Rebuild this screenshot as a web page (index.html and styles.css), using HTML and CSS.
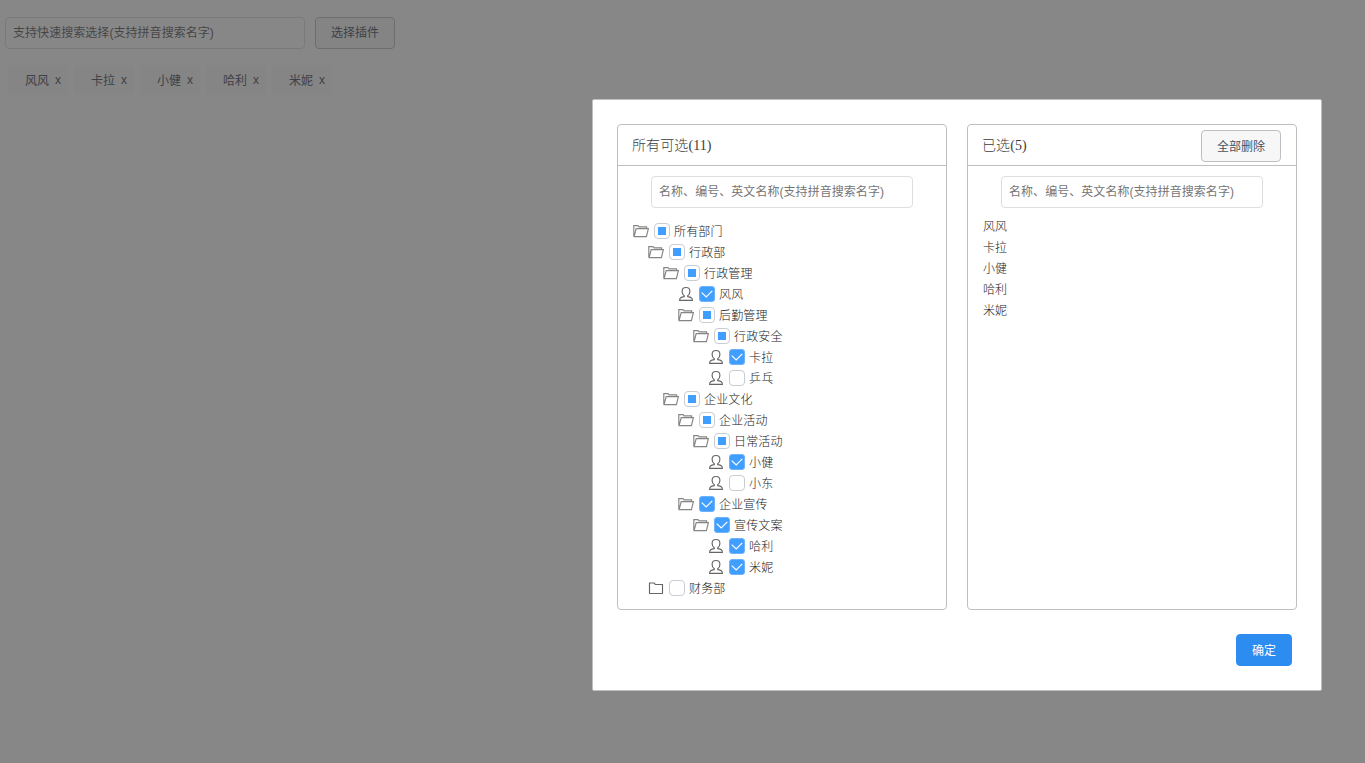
FILE: index.html
```html
<!DOCTYPE html>
<html lang="zh-CN">
<head>
  <meta charset="UTF-8">
  <meta name="viewport" content="width=device-width, initial-scale=1.0">
  <title>选择插件</title>
  <link rel="stylesheet" href="styles.css">
</head>
<body>
  <div class="page">
    <div class="search-bar">
      <input class="input search-input" type="text" placeholder="支持快速搜索选择(支持拼音搜索名字)">
      <button class="btn" type="button">选择插件</button>
    </div>
    <div class="tags">
      <span class="tag">风风 <i>x</i></span>
      <span class="tag">卡拉 <i>x</i></span>
      <span class="tag">小健 <i>x</i></span>
      <span class="tag">哈利 <i>x</i></span>
      <span class="tag">米妮 <i>x</i></span>
    </div>
  </div>

  <div class="mask"></div>

  <div class="dialog">
    <div class="panels">
      <div class="panel">
        <div class="panel-header"><span>所有可选(11)</span></div>
        <input class="input panel-input" type="text" placeholder="名称、编号、英文名称(支持拼音搜索名字)">
        <div id="tree" class="tree"></div>
      </div>
      <div class="panel">
        <div class="panel-header">
          <span>已选(5)</span>
          <button class="btn" type="button">全部删除</button>
        </div>
        <input class="input panel-input" type="text" placeholder="名称、编号、英文名称(支持拼音搜索名字)">
        <ul class="selected">
          <li>风风</li>
          <li>卡拉</li>
          <li>小健</li>
          <li>哈利</li>
          <li>米妮</li>
        </ul>
      </div>
    </div>
    <div class="dialog-footer">
      <button class="btn btn-primary" type="button">确定</button>
    </div>
  </div>

  <script src="tree.js"></script>
</body>
</html>
```

FILE: styles.css
```css
* {
  box-sizing: border-box;
}

body {
  margin: 0;
  height: 763px;
  overflow: hidden;
  background-color: #fff;
  color: #495060;
  font-family: "Liberation Sans", "Noto Sans CJK SC", sans-serif;
  font-size: 12px;
}

.page {
  padding: 17px 5px;
}

.search-bar {
  display: flex;
  gap: 10px;
}

.input {
  height: 32px;
  padding: 0 7px;
  border: 1px solid #dddee1;
  border-radius: 4px;
  background-color: #fff;
  font-family: inherit;
  font-size: 12px;
  letter-spacing: 0.05px;
}

.input::placeholder {
  color: #757575;
}

.search-input {
  width: 300px;
}

.search-input::placeholder {
  color: #5c5c5c;
}

.btn {
  height: 32px;
  padding: 0 15px 1px;
  border: 1px solid #bcbfc4;
  border-radius: 4px;
  background-color: #f7f7f7;
  color: #495060;
  font-family: inherit;
  font-size: 12px;
  cursor: pointer;
}

.search-bar .btn {
  padding-bottom: 3px;
}

.btn-primary {
  border-color: #2d8cf0;
  background-color: #2d8cf0;
  color: #fff;
}

.tags {
  display: flex;
  gap: 6px;
  padding: 16px 3px;
}

.tag {
  display: flex;
  width: 60px;
  height: 30px;
  padding: 0 0 2px 17px;
  gap: 6px;
  align-items: center;
  border-radius: 4px;
  background-color: #f9f9f9;
}

.tag i {
  padding-top: 1px;
  font-style: normal;
  cursor: pointer;
}

.mask {
  position: fixed;
  inset: 0;
  background-color: rgba(55, 55, 55, 0.6);
}

.dialog {
  position: fixed;
  top: 99px;
  left: 592px;
  width: 730px;
  height: 592px;
  padding: 24px;
  border: 1px solid #c0c0c0;
  border-radius: 2px;
  background-color: #fff;
}

.panels {
  display: flex;
  gap: 20px;
}

.panel {
  display: flex;
  flex-direction: column;
  width: 330px;
  height: 486px;
  border: 1px solid #bfbfbf;
  border-radius: 4px;
}

.panel-header {
  display: flex;
  justify-content: space-between;
  align-items: center;
  height: 41px;
  padding: 2px 15px 0 14px;
  border-bottom: 1px solid #bfbfbf;
  color: #3c3c3c;
  font-family: "Liberation Serif", "Noto Sans CJK SC", serif;
  font-size: 14px;
  font-weight: 300;
}

.panel-header span {
  padding-bottom: 5px;
  letter-spacing: 0.1px;
}

.panel-header .btn {
  font-family: "Liberation Sans", "Noto Sans CJK SC", sans-serif;
}

.panel-input {
  width: 262px;
  margin: 10px 33px 0;
}

.tree {
  padding: 12px 15px 0;
  color: #222;
}

.tree-node {
  display: flex;
  align-items: center;
  height: 21px;
  font-weight: 300;
}

.tree-node span {
  margin-left: 4px;
  letter-spacing: 0.15px;
}

.icon {
  width: 16px;
  height: 16px;
  margin-right: 5px;
  fill: none;
  stroke: #666;
  stroke-width: 1.15;
}

.icon-open {
  stroke: #858585;
}

.checkbox {
  display: flex;
  width: 16px;
  height: 16px;
  align-items: center;
  justify-content: center;
  border: 1px solid #c8cdd3;
  border-radius: 4px;
}

.checkbox.half::before {
  content: "";
  width: 8px;
  height: 8px;
  background-color: #409eff;
}

.checkbox.checked {
  border-color: #6db3fb;
  border-radius: 3px;
  background-color: #409eff;
}

.checkbox svg {
  width: 14px;
  height: 14px;
  fill: none;
  stroke: #fff;
  stroke-width: 1.2;
}

.selected {
  margin: 0;
  padding: 9px 15px;
  list-style: none;
  color: #222;
  font-weight: 300;
  line-height: 21px;
}

.dialog-footer {
  display: flex;
  justify-content: flex-end;
  padding: 24px 5px 0;
}
```

FILE: tree.js
```js
// name, level, icon, checkbox state
var nodes = [
  ['所有部门', 0, 'open', 'half'],
  ['行政部', 1, 'open', 'half'],
  ['行政管理', 2, 'open', 'half'],
  ['风风', 3, 'user', 'checked'],
  ['后勤管理', 3, 'open', 'half'],
  ['行政安全', 4, 'open', 'half'],
  ['卡拉', 5, 'user', 'checked'],
  ['乒乓', 5, 'user', ''],
  ['企业文化', 2, 'open', 'half'],
  ['企业活动', 3, 'open', 'half'],
  ['日常活动', 4, 'open', 'half'],
  ['小健', 5, 'user', 'checked'],
  ['小东', 5, 'user', ''],
  ['企业宣传', 3, 'open', 'checked'],
  ['宣传文案', 4, 'open', 'checked'],
  ['哈利', 5, 'user', 'checked'],
  ['米妮', 5, 'user', 'checked'],
  ['财务部', 1, 'closed', '']
];

var icons = {
  open: '<path d="M0.8 13.2V2.6H5L6.1 3.8H13.6V5.4M1.1 13.6L3.2 5.6H15.4L13.4 13.6Z"/>',
  closed: '<path d="M1.5 13.5V3H6L7.4 4.5H14.5V13.5Z"/>',
  user: '<path d="M6.3 9.8C4.9 8.8 4.1 7.2 4.1 5.4C4.1 3 5.7 1.5 8 1.5S11.9 3 11.9 5.4C11.9 7.2 11.1 8.8 9.7 9.8V10.6C12.8 11.3 14.4 11.6 14.4 14.4H1.6C1.6 11.6 3.2 11.3 6.3 10.6Z"/>'
};

var html = '';
nodes.forEach(function (node) {
  var tick = node[3] === 'checked' ? '<svg viewBox="0 0 14 14"><path d="M1.7 5.6L6.2 10L12.3 3.8"/></svg>' : '';
  html += '<div class="tree-node" style="padding-left:' + node[1] * 15 + 'px">' +
    '<svg class="icon icon-' + node[2] + '" viewBox="0 0 16 16">' + icons[node[2]] + '</svg>' +
    '<div class="checkbox ' + node[3] + '">' + tick + '</div>' +
    '<span>' + node[0] + '</span></div>';
});
document.getElementById('tree').innerHTML = html;
```
